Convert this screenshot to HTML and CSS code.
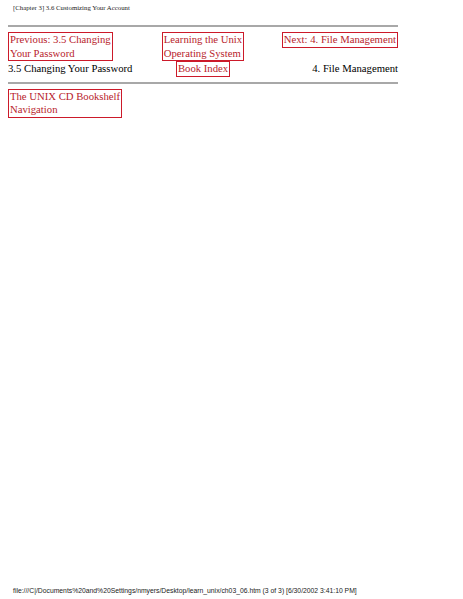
FILE: index.html
```html
<!DOCTYPE html>
<html>
<head>
<meta charset="utf-8">
<link rel="stylesheet" href="styles.css">
</head>
<body>
<div class="page">
  <div class="running-head">[Chapter 3] 3.6 Customizing Your Account</div>
  <div class="content">
    <hr class="rule">
    <div class="nav">
      <div class="cell left"><span class="link">Previous: 3.5 Changing<br>Your Password</span></div>
      <div class="cell center"><span class="link">Learning the Unix<br>Operating System</span></div>
      <div class="cell right"><span class="link">Next: 4. File Management</span></div>
      <div class="cell left"><span class="plain">3.5 Changing Your Password</span></div>
      <div class="cell center"><span class="link">Book Index</span></div>
      <div class="cell right"><span class="plain">4. File Management</span></div>
    </div>
    <hr class="rule rule2">
    <span class="link">The UNIX CD Bookshelf<br>Navigation</span>
  </div>
  <div class="spacer"></div>
  <div class="footer">file:///C|/Documents%20and%20Settings/nmyers/Desktop/learn_unix/ch03_06.htm (3 of 3) [6/30/2002 3:41:10 PM]</div>
</div>
</body>
</html>
```

FILE: styles.css
```css
html, body {
  margin: 0;
  padding: 0;
  background: #fff;
}
.page {
  width: 463px;
  height: 599px;
  display: flex;
  flex-direction: column;
  font-family: "Liberation Serif", "Times New Roman", serif;
  color: #000;
}
.running-head {
  font-size: 6.8px;
  padding: 4px 0 0 13px;
  line-height: 8px;
  color: #222;
}
.content {
  padding: 0 0 0 8px;
  width: 390px;
  font-size: 10.7px;
  line-height: 13.5px;
}
.rule {
  border: none;
  height: 2px;
  background: #a8a8a8;
  margin: 13px 0 5px 0;
}
.rule2 {
  margin: 5px 0 5px 0;
}
.nav {
  display: grid;
  grid-template-columns: 1fr 1fr 1fr;
  align-items: start;
}
.cell {
  display: flex;
  white-space: nowrap;
}
.left { justify-content: flex-start; }
.center { justify-content: center; }
.right { justify-content: flex-end; }
.link {
  display: inline-block;
  color: #b81c2c;
  border: 1.5px solid #cc1a2a;
  padding: 0 1px;
}
.plain {
  display: inline-block;
  padding-top: 1px;
}
.spacer {
  flex: 1;
}
.footer {
  font-family: "Liberation Sans", Arial, sans-serif;
  font-size: 6.8px;
  line-height: 8px;
  padding: 0 0 4px 13px;
  color: #222;
}
```
